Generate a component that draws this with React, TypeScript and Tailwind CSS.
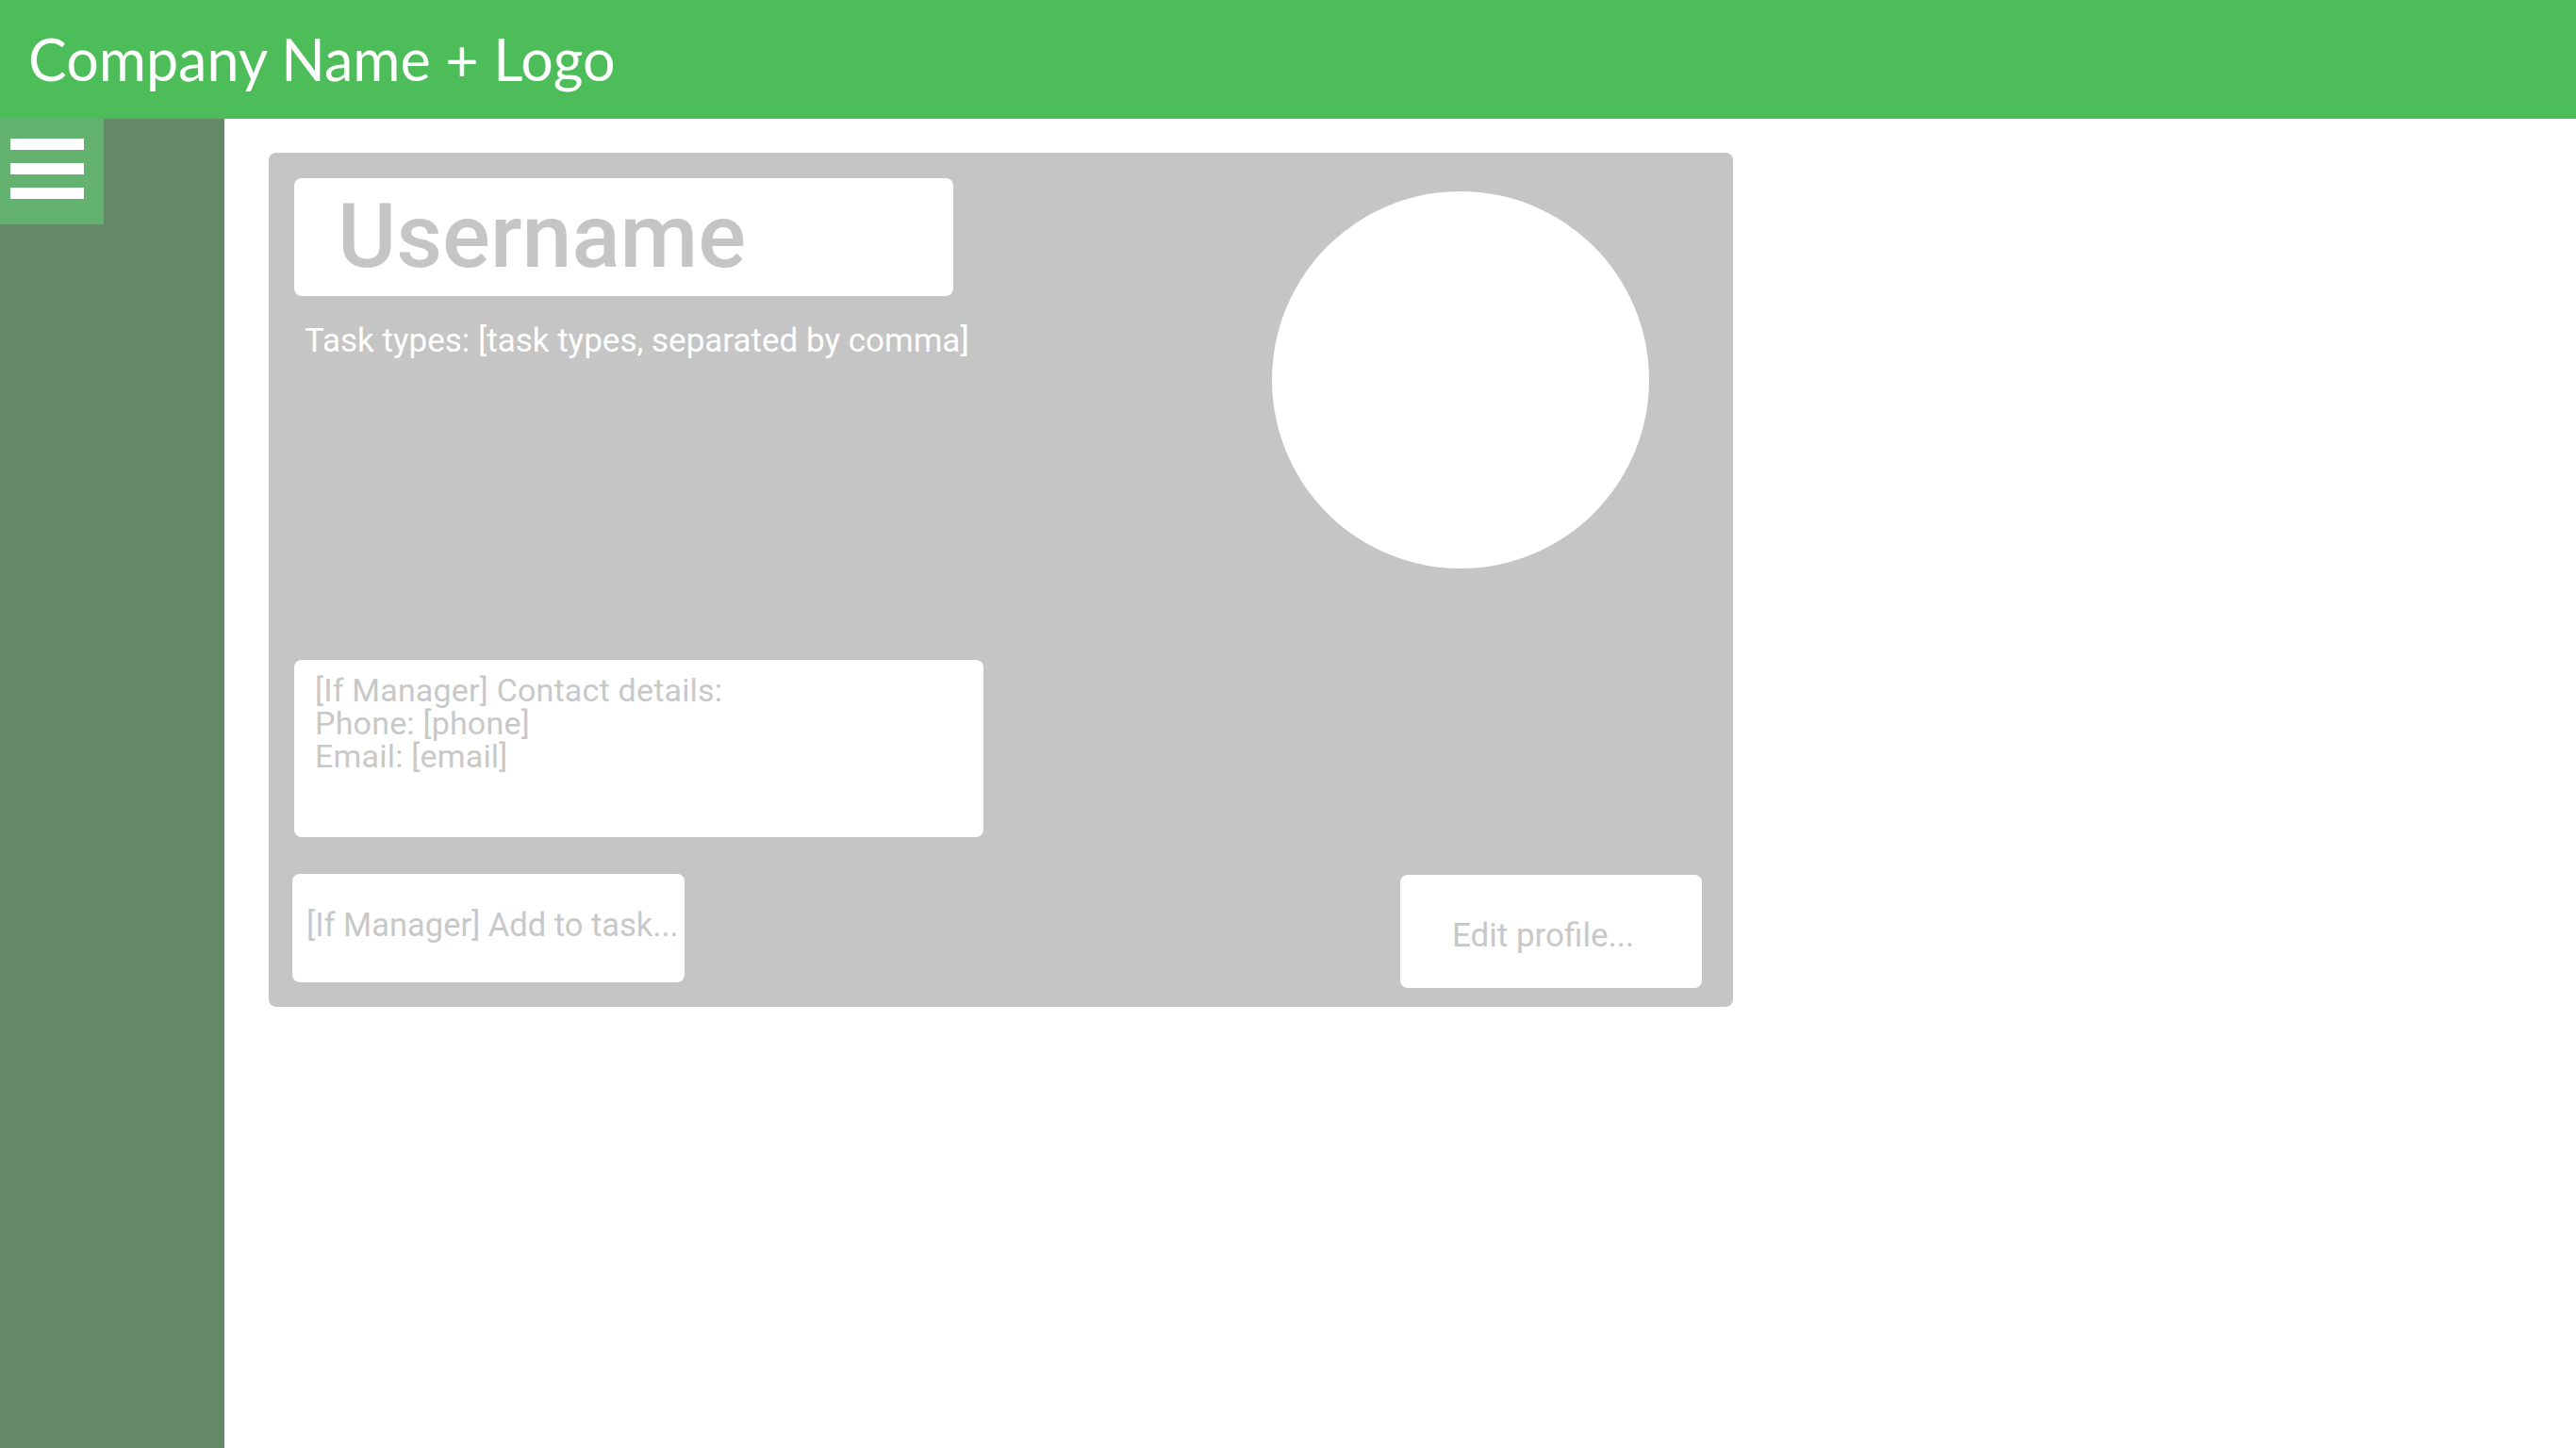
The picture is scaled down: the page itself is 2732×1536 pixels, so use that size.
import React from "react";

export default function App() {
  const body = { fontFamily: "Roboto, 'Liberation Sans', sans-serif" };
  return (
    <div className="w-[2732px] h-[1536px] flex flex-col bg-white overflow-hidden">
      <header className="h-[126px] shrink-0 bg-[#4dbd5a] flex items-center pl-[30px]">
        <span
          className="text-white text-[61px] leading-none mt-[-2px]"
          style={{ fontFamily: "Lato, 'Open Sans', sans-serif" }}
        >
          Company Name + Logo
        </span>
      </header>
      <div className="flex flex-1">
        <aside className="w-[238px] shrink-0 bg-[#658a69]">
          <button className="w-[110px] h-[112px] bg-[#64b26f] flex flex-col pl-[11px] pt-[21px] gap-[14px]">
            <span className="block w-[78px] h-[12px] bg-white" />
            <span className="block w-[78px] h-[12px] bg-white" />
            <span className="block w-[78px] h-[12px] bg-white" />
          </button>
        </aside>
        <main className="flex-1 pl-[47px] pt-[36px]" style={body}>
          <div className="w-[1553px] h-[906px] bg-[#c5c5c5] rounded-[8px] flex flex-col pl-[27px] pr-[33px] pt-[27px]">
            <div className="flex justify-between">
              <div className="flex flex-col">
                <div className="w-[699px] h-[125px] bg-white rounded-[8px] flex items-center pl-[46px]">
                  <span className="text-[95px] font-medium leading-none text-[#c5c5c5] mt-[-2px]">Username</span>
                </div>
                <p className="mt-[30px] ml-[11px] text-[35px] leading-none text-white">
                  Task types: [task types, separated by comma]
                </p>
              </div>
              <div className="w-[400px] h-[400px] rounded-full bg-white mt-[14px] mr-[56px]" />
            </div>
            <div className="mt-[97px] w-[731px] h-[188px] bg-white rounded-[8px] pl-[22px] pt-[15px] text-[34px] leading-[35px] tracking-[0.2px] text-[#c8c8c8]">
              <div>[If Manager] Contact details:</div>
              <div>Phone: [phone]</div>
              <div>Email: [email]</div>
            </div>
            <div className="mt-[39px] flex justify-between items-start">
              <button className="ml-[-2px] w-[416px] h-[115px] bg-white rounded-[8px] flex items-center pl-[15px] pb-[6px] text-[34.5px] leading-none text-[#c8c8c8]">
                [If Manager] Add to task...
              </button>
              <button className="mt-[1px] w-[320px] h-[120px] bg-white rounded-[8px] flex items-center pl-[55px] pt-[8px] text-[35px] leading-none text-[#c8c8c8]">
                Edit profile...
              </button>
            </div>
          </div>
        </main>
      </div>
    </div>
  );
}
